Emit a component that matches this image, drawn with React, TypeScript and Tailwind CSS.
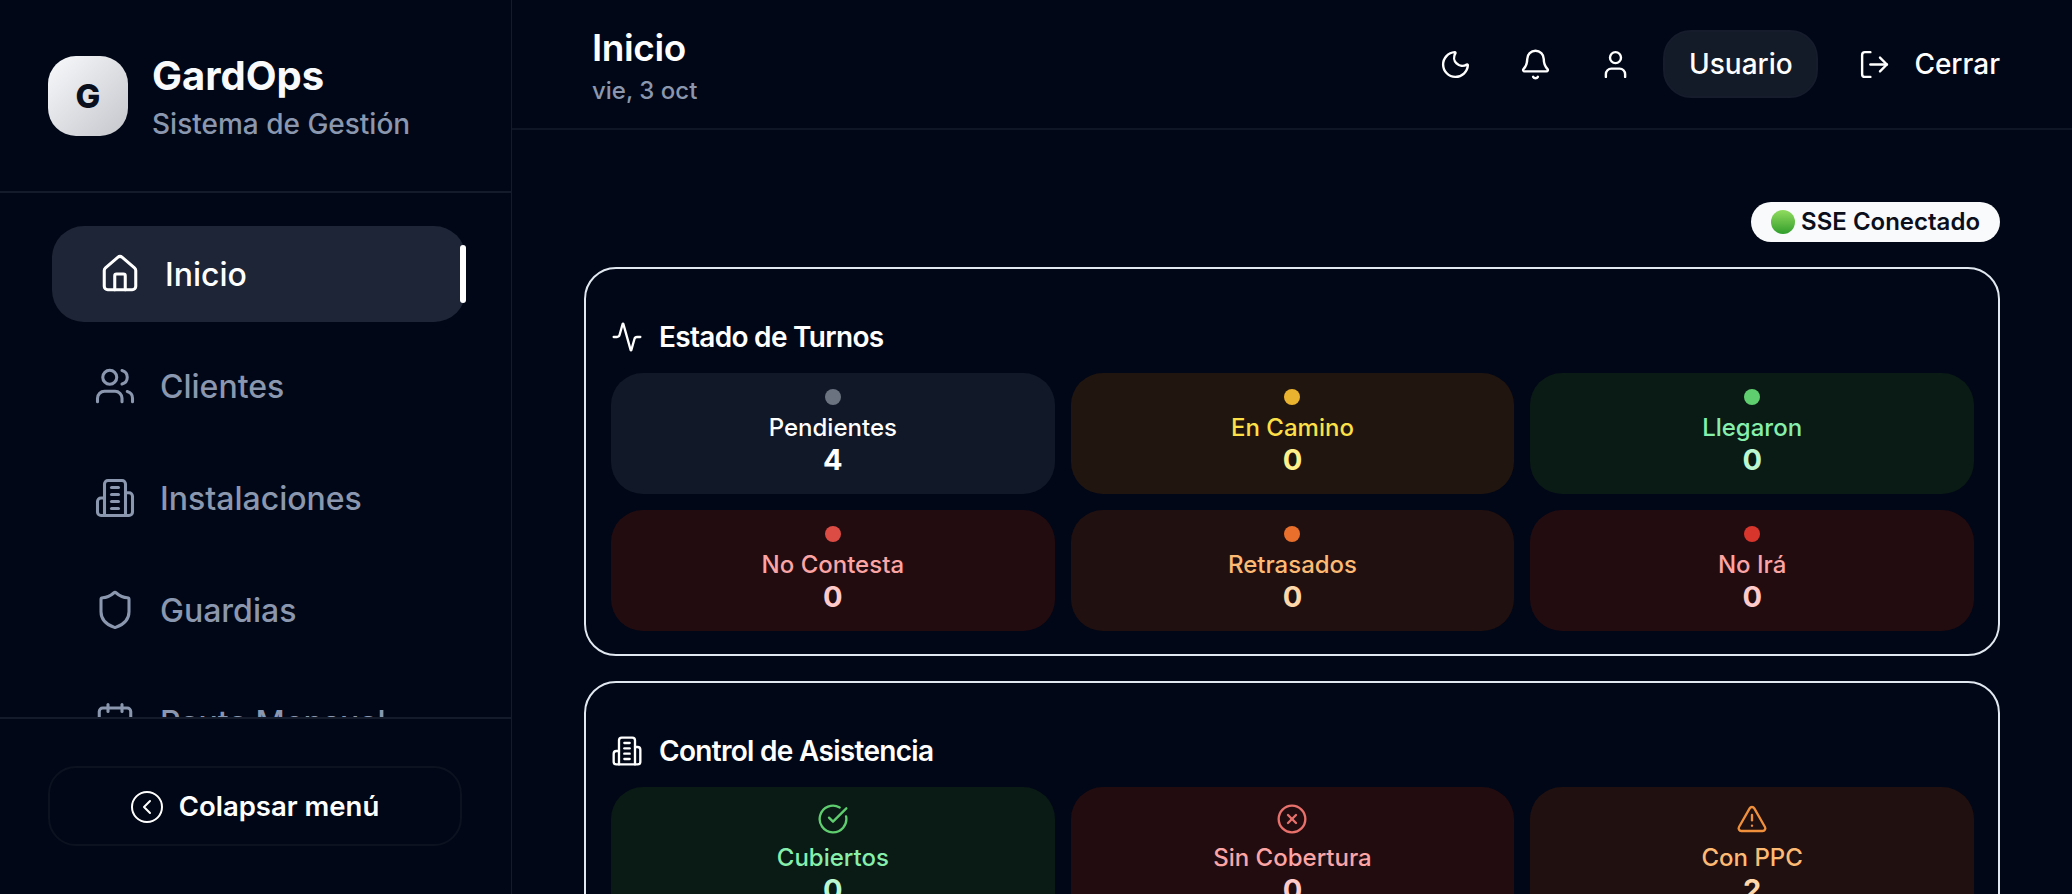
import React from "react";
import { Activity, Bell, Calendar, CircleCheckBig, ChevronLeft, CircleX, House, LogOut, Moon, Shield, TriangleAlert, User, Users } from "lucide-react";

function Building({ size = 24, strokeWidth = 2 }: { size?: number; strokeWidth?: number }) {
  return (
    <svg width={size} height={size} viewBox="0 0 24 24" fill="none" stroke="currentColor" strokeWidth={strokeWidth} strokeLinecap="round" strokeLinejoin="round" className="shrink-0">
      <path d="M6 22V4a2 2 0 0 1 2-2h8a2 2 0 0 1 2 2v18Z" />
      <path d="M6 12H4a2 2 0 0 0-2 2v6a2 2 0 0 0 2 2h2" />
      <path d="M18 9h2a2 2 0 0 1 2 2v9a2 2 0 0 1-2 2h-2" />
      <path d="M10 6h4" />
      <path d="M10 10h4" />
      <path d="M10 14h4" />
      <path d="M10 18h4" />
    </svg>
  );
}

const nav = [
  { label: "Clientes", Icon: Users },
  { label: "Instalaciones", Icon: Building },
  { label: "Guardias", Icon: Shield },
  { label: "Pauta Mensual", Icon: Calendar },
];

const turnos = [
  { label: "Pendientes", value: "4", bg: "bg-[#111827]", dot: "bg-[#6b7280]", lc: "text-white", vc: "text-white" },
  { label: "En Camino", value: "0", bg: "bg-[#20150f]", dot: "bg-[#eab32f]", lc: "text-[#fde047]", vc: "text-[#fef08a]" },
  { label: "Llegaron", value: "0", bg: "bg-[#0a1a15]", dot: "bg-[#5fce6f]", lc: "text-[#86efac]", vc: "text-[#bbf7d0]" },
  { label: "No Contesta", value: "0", bg: "bg-[#220c10]", dot: "bg-[#dc4c45]", lc: "text-[#fca5a5]", vc: "text-[#fecaca]" },
  { label: "Retrasados", value: "0", bg: "bg-[#20100f]", dot: "bg-[#e8702c]", lc: "text-[#fdba74]", vc: "text-[#fed7aa]" },
  { label: "No Irá", value: "0", bg: "bg-[#220c10]", dot: "bg-[#d8362c]", lc: "text-[#fca5a5]", vc: "text-[#fecaca]" },
];

const asistencia = [
  { label: "Cubiertos", value: "0", bg: "bg-[#0a1a15]", Icon: CircleCheckBig, ic: "text-[#5fce6f]", lc: "text-[#86efac]", vc: "text-[#bbf7d0]" },
  { label: "Sin Cobertura", value: "0", bg: "bg-[#220c10]", Icon: CircleX, ic: "text-[#e8716c]", lc: "text-[#fca5a5]", vc: "text-[#fecaca]" },
  { label: "Con PPC", value: "2", bg: "bg-[#20100f]", Icon: TriangleAlert, ic: "text-[#f0903c]", lc: "text-[#fdba74]", vc: "text-[#fed7aa]" },
];

export default function App() {
  return (
    <div className="flex h-screen overflow-hidden bg-[#010716] text-white font-['Inter',sans-serif]">
      <aside className="flex h-full w-[512px] shrink-0 flex-col border-r border-[#141b2b]">
        <div className="flex h-[193px] shrink-0 items-start gap-[24px] border-b-2 border-[#141b2b] pl-[48px] pt-[56px]">
          <div className="flex h-[80px] w-[80px] items-center justify-center rounded-[28px] bg-gradient-to-br from-[#f8fafc] to-[#c4c6cc]">
            <span className="text-[33px] font-extrabold leading-none text-[#0a0f1e]">G</span>
          </div>
          <div className="-mt-[6px]">
            <div className="text-[40px] font-bold leading-[52px] text-[#f8fafc]">GardOps</div>
            <div className="mt-[4px] text-[28px] font-[550] leading-[36px] text-[#8a97ae]">Sistema de Gestión</div>
          </div>
        </div>
        <nav className="flex min-h-0 flex-1 flex-col gap-[16px] overflow-hidden pl-[48px] pr-[49px] pt-[33px]">
          <div className="relative flex h-[96px] shrink-0 translate-x-[4px] items-center gap-[24px] rounded-[32px] bg-[#1e2536] pl-[47px] text-[32px] font-[550]">
            <House size={42} strokeWidth={1.75} className="shrink-0" />
            <span className="pt-[2px]">Inicio</span>
            <span className="absolute right-0 top-[19px] h-[58px] w-[6px] rounded-full bg-white" />
          </div>
          {nav.map(({ label, Icon }) => (
            <div key={label} className="flex h-[96px] shrink-0 items-center gap-[24px] pl-[46px] text-[32px] font-[550] text-[#8a97ae]">
              <Icon size={42} strokeWidth={1.75} className="shrink-0" />
              <span className="pt-[2px]">{label}</span>
            </div>
          ))}
        </nav>
        <div className="shrink-0 border-t-2 border-[#141b2b] px-[48px] pt-[47px] pb-[48px]">
          <button className="flex h-[80px] w-[414px] items-center justify-center gap-[16px] rounded-[28px] border-2 border-[#0c1220] pt-[2px] text-[27.5px] font-semibold">
            <span className="flex h-[32px] w-[32px] items-center justify-center rounded-full border-[2px] border-white">
              <ChevronLeft size={24} strokeWidth={2} />
            </span>
            Colapsar menú
          </button>
        </div>
      </aside>

      <div className="flex min-w-0 flex-1 flex-col">
        <header className="flex h-[130px] shrink-0 items-center justify-between border-b-2 border-[#0f1626] pl-[80px] pr-[72px]">
          <div className="pt-[2px]">
            <div className="text-[37px] font-semibold leading-[50px] tracking-[-0.4px]">Inicio</div>
            <div className="mt-[2px] text-[24px] font-[550] leading-[32px] text-[#8a97ae]">vie, 3 oct</div>
          </div>
          <div className="flex items-center">
            <Moon size={33} strokeWidth={1.75} className="mr-[47px]" />
            <Bell size={33} strokeWidth={1.75} className="mr-[47px]" />
            <User size={33} strokeWidth={1.75} className="mr-[31px]" />
            <div className="flex h-[68px] w-[155px] items-center justify-center rounded-[28px] border-2 border-[#161c2c] bg-[#131a28] text-[28px] font-[550]">Usuario</div>
            <LogOut size={33} strokeWidth={1.75} className="ml-[40px] mr-[23px]" />
            <span className="text-[28px] font-[550]">Cerrar</span>
          </div>
        </header>

        <main className="flex min-h-0 flex-1 flex-col overflow-hidden pl-[72px] pr-[72px] pt-[72px]">
          <div className="flex justify-end">
            <div className="flex h-[40px] items-center gap-[6px] rounded-full bg-[#f8fafc] pl-[20px] pr-[20px] text-[24px] font-semibold text-[#0b0f1c]">
              <span className="h-[24px] w-[24px] rounded-full bg-gradient-to-b from-[#8fdc5e] to-[#2e9e2c]" />
              SSE Conectado
            </div>
          </div>

          <section className="mt-[25px] h-[389px] shrink-0 rounded-[32px] border-2 border-[#e2e8f0] pl-[25px] pr-[24px] pt-[50px]">
            <h2 className="flex h-[36px] items-center gap-[16px] text-[28px] font-semibold tracking-[-0.7px]">
              <Activity size={32} strokeWidth={1.75} />
              Estado de Turnos
            </h2>
            <div className="mt-[18px] grid grid-cols-3 gap-[16px]">
              {turnos.map((t) => (
                <div key={t.label} className={`flex h-[121px] flex-col items-center rounded-[32px] pt-[16px] ${t.bg}`}>
                  <span className={`h-[16px] w-[16px] rounded-full ${t.dot}`} />
                  <span className={`mt-[7px] text-[24px] font-[550] leading-[32px] ${t.lc}`}>{t.label}</span>
                  <span className={`text-[29px] font-bold leading-[32px] ${t.vc}`}>{t.value}</span>
                </div>
              ))}
            </div>
          </section>

          <section className="mt-[25px] shrink-0 rounded-[32px] border-2 border-[#e2e8f0] pl-[25px] pr-[24px] pt-[50px] pb-[24px]">
            <h2 className="flex h-[36px] items-center gap-[16px] text-[28px] font-semibold tracking-[-0.7px]">
              <Building size={32} strokeWidth={1.75} />
              Control de Asistencia
            </h2>
            <div className="mt-[18px] grid grid-cols-3 gap-[16px]">
              {asistencia.map((t) => (
                <div key={t.label} className={`flex h-[150px] flex-col items-center rounded-[32px] pt-[16px] ${t.bg}`}>
                  <t.Icon size={32} strokeWidth={1.75} className={t.ic} />
                  <span className={`mt-[7px] text-[24px] font-[550] leading-[32px] ${t.lc}`}>{t.label}</span>
                  <span className={`text-[29px] font-bold leading-[32px] ${t.vc}`}>{t.value}</span>
                </div>
              ))}
            </div>
          </section>
        </main>
      </div>
    </div>
  );
}
